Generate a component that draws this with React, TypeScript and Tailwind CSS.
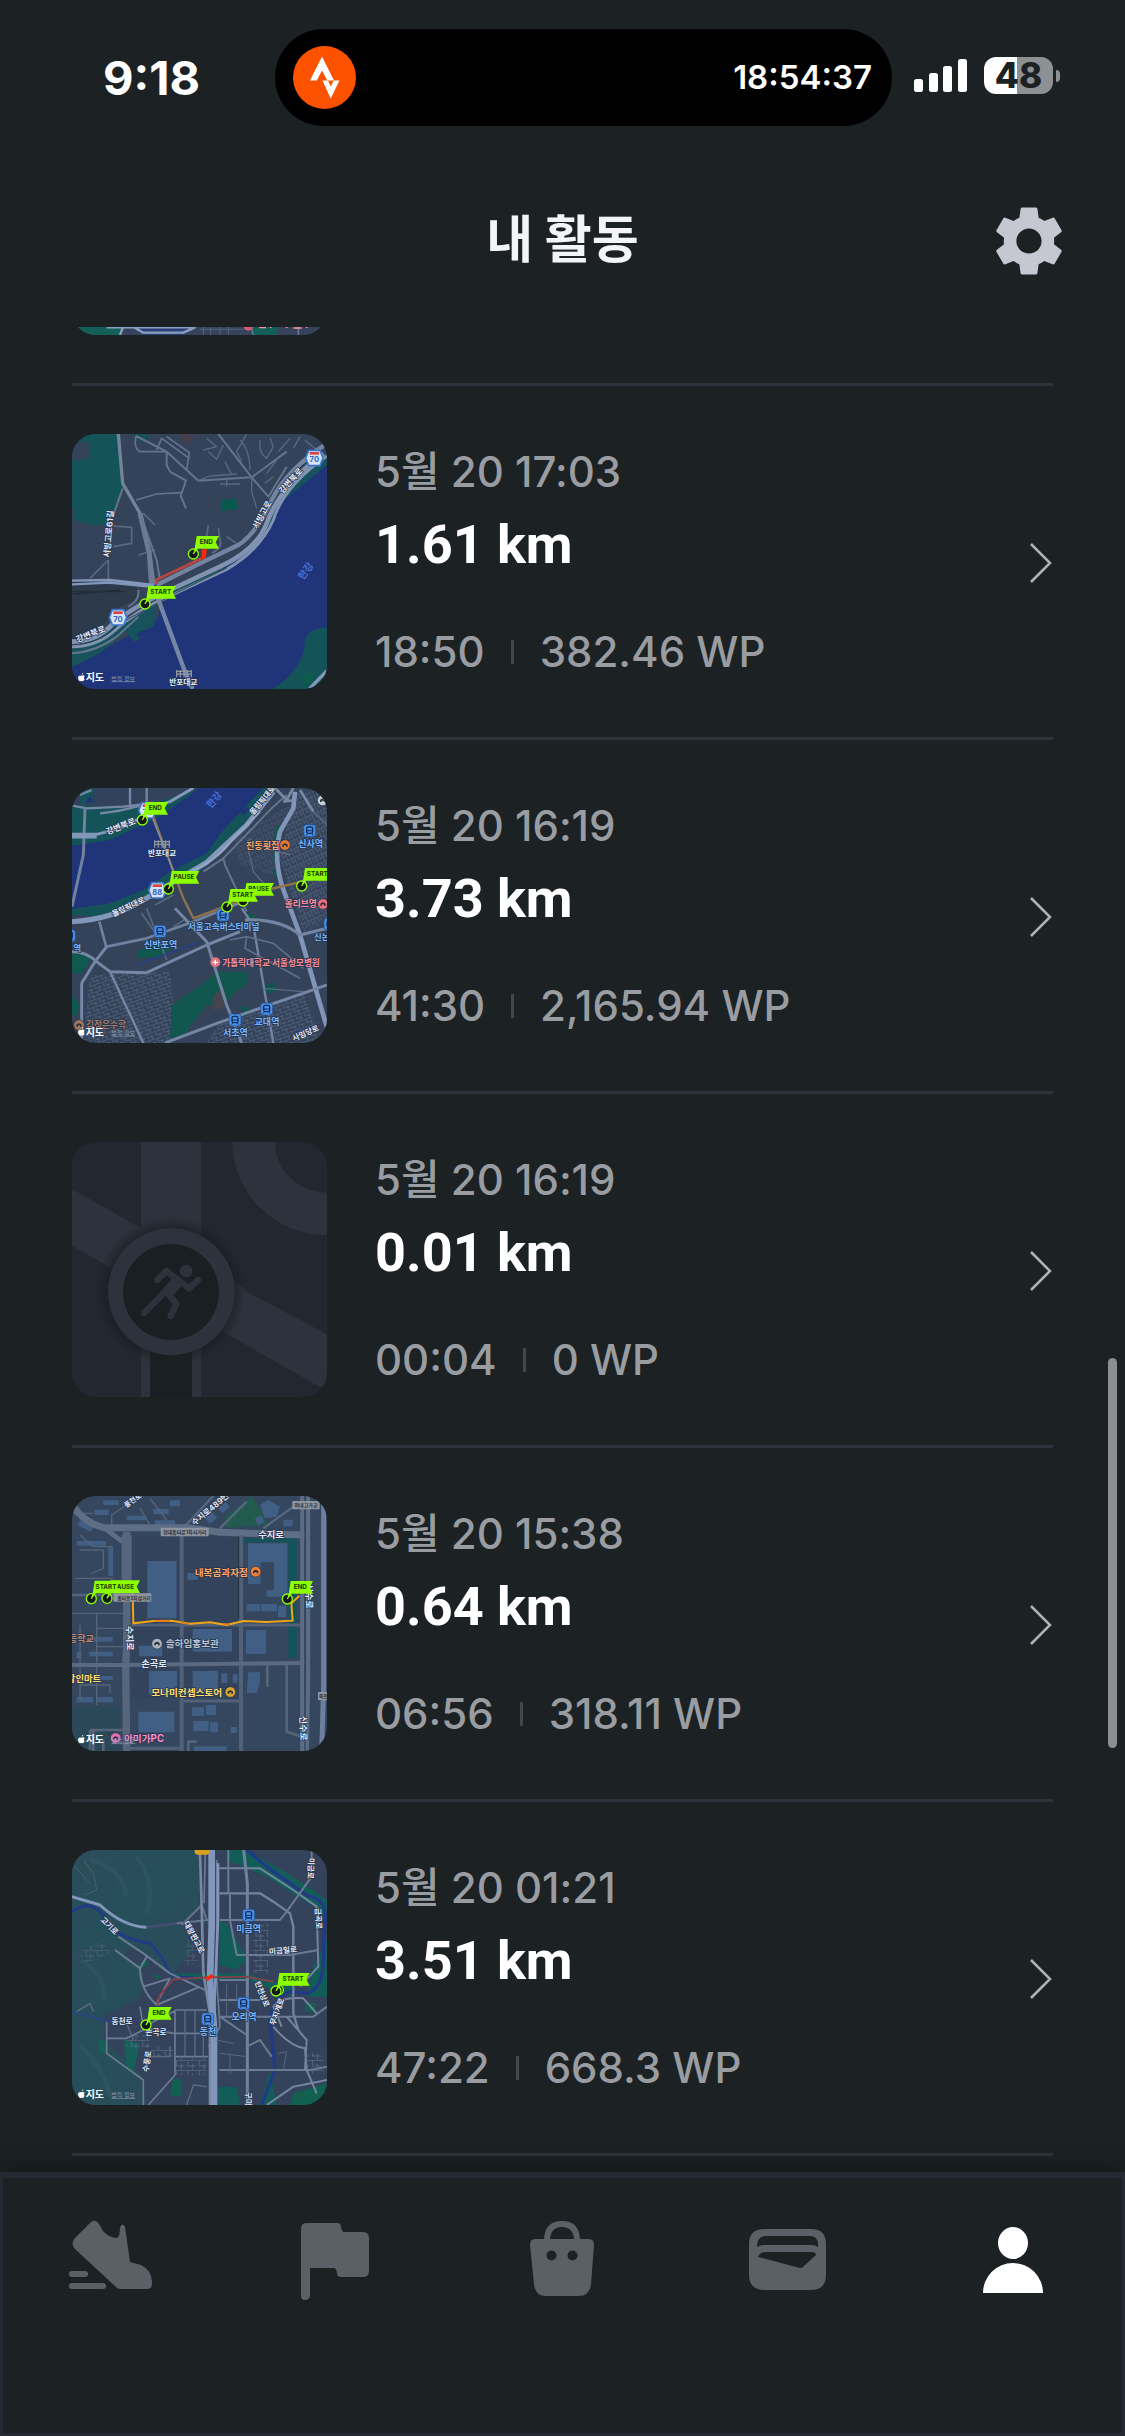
import type { ReactNode } from 'react'
import { MdSettings } from 'react-icons/md'

interface Activity {
  id: number
  date: string
  distance: string
  duration: string
  points: string
  map: ReactNode
}

interface Road {
  d: string
  w: number
  c?: string
}

const ROAD = '#64748c'
const MAIN_ROAD = '#8397bb'
const PARK = '#145459'
const WATER = '#1f3479'

const Roads = ({ items }: { items: Road[] }) => (
  <g fill="none" strokeLinejoin="round">
    {items.map((road, i) => (
      <path key={i} d={road.d} strokeWidth={road.w} stroke={road.c ?? ROAD} />
    ))}
  </g>
)

interface LabelProps {
  x: number
  y: number
  text: string
  size?: number
  fill?: string
  rotate?: number
  halo?: string
}

const Label = ({ x, y, text, size = 25, fill = '#e2eafa', rotate = 0, halo = '#26344c' }: LabelProps) => (
  <text
    x={x}
    y={y}
    fontSize={size}
    fontWeight={700}
    fill={fill}
    stroke={halo}
    strokeWidth={4}
    paintOrder="stroke"
    textAnchor="middle"
    dominantBaseline="central"
    transform={`rotate(${rotate} ${x} ${y})`}
  >
    {text}
  </text>
)

// x, y is the centre of the pin, the flag hangs to its upper right
const Pin = ({ x, y, text, w = 86 }: { x: number; y: number; text: string; w?: number }) => (
  <g>
    <circle cx={x} cy={y} r={15} fill="#14181b" stroke="#8cff00" strokeWidth={4} />
    <path d={`M${x} ${y} L${x + 10} ${y - 20}`} stroke="#8cff00" strokeWidth={4} />
    <path
      d={`M${x + 10} ${y - 54} H${x + w + 7} L${x + w - 3} ${y - 35} L${x + w + 7} ${y - 16} H${x + 14} L${x + 2} ${y - 2} Z`}
      fill="#8cff00"
    />
    <text
      x={x + w / 2 + 4}
      y={y - 35}
      fontSize={19}
      fontWeight={700}
      fill="#1b3300"
      textAnchor="middle"
      dominantBaseline="central"
    >
      {text}
    </text>
  </g>
)

const Station = ({ x, y }: { x: number; y: number }) => (
  <g>
    <rect x={x - 18} y={y - 18} width={36} height={36} rx={8} fill="#4a90e8" stroke="#1e4a8c" strokeWidth={2} />
    <rect x={x - 9} y={y - 11} width={18} height={19} rx={5} fill="none" stroke="#122d5c" strokeWidth={4} />
    <path d={`M${x - 9} ${y} h18 M${x - 7} ${y + 9} l-3 5 M${x + 7} ${y + 9} l3 5`} stroke="#122d5c" strokeWidth={3} />
  </g>
)

const Shield = ({ x, y, text }: { x: number; y: number; text: string }) => (
  <g>
    <path
      d={`M${x - 17} ${y - 23} H${x + 17} L${x + 26} ${y} L${x + 17} ${y + 23} H${x - 17} L${x - 26} ${y} Z`}
      fill="#d5e2f7"
      stroke="#3c76cc"
      strokeWidth={5}
    />
    <rect x={x - 14} y={y - 18} width={28} height={8} fill="#d8463f" />
    <text x={x} y={y + 5} fontSize={23} fontWeight={700} fill="#2f6bc6" textAnchor="middle" dominantBaseline="central">
      {text}
    </text>
  </g>
)

const Poi = ({ x, y, fill }: { x: number; y: number; fill: string }) => (
  <g>
    <circle cx={x} cy={y} r={16} fill={fill} stroke="#25303f" strokeWidth={2} />
    <path d={`M${x - 8} ${y + 5} v-6 q8 -9 16 0 v6 h-5 v-4 h-6 v4 Z`} fill="#26303d" />
  </g>
)

const Gate = ({ x, y }: { x: number; y: number }) => (
  <path
    d={`M${x - 24} ${y - 8} h48 M${x - 24} ${y} h48 M${x - 22} ${y - 12} v22 M${x - 11} ${y - 12} v22 M${x} ${y - 12} v22 M${x + 11} ${y - 12} v22 M${x + 22} ${y - 12} v22`}
    stroke="#8f959d"
    strokeWidth={4}
  />
)

const Attribution = ({ y }: { y: number }) => (
  <g>
    <path
      d={`M65 ${y - 8} q0 -5 5 -6 q0 5 -5 6 M64 ${y - 5} q-8 -3 -10 5 q0 8 6 12 q4 -2 8 0 q4 -1 6 -6 q-5 -5 0 -10 q-4 -4 -10 -1`}
      fill="#fff"
    />
    <text x={77} y={y} fontSize={30} fontWeight={700} fill="#fff" dominantBaseline="central">
      지도
    </text>
    <text x={154} y={y + 2} fontSize={18} fill="#8b99ad" textDecoration="underline" dominantBaseline="central">
      법적 정보
    </text>
  </g>
)

const MapFrame = ({ top, fill, children }: { top: number; fill: string; children: ReactNode }) => (
  <svg
    viewBox={`36 ${top} 765 765`}
    className="size-[255px] font-['Inter','Noto_Sans_CJK_KR',sans-serif]"
    aria-hidden="true"
  >
    <rect x={36} y={top} width={765} height={765} fill={fill} />
    {children}
  </svg>
)

const PreviousMap = () => (
  <MapFrame top={0} fill="#35445c">
    <path d="M36 600 H200 L180 765 H36 Z" fill="#136059" />
    <path d="M220 735 H410 L370 765 H250 Z" fill="#2b3f74" />
    <path d="M560 700 H650 V765 H575 Z" fill="#136059" />
    <Roads
      items={[
        { d: 'M205 700 L180 765 M140 742 H405 L370 758 H250 L215 738', w: 7, c: '#8ba0c0' },
        { d: 'M405 742 L440 720 M560 690 L580 765 M715 690 V765', w: 5 },
        { d: 'M430 730 V765 M452 730 V765 M480 730 V765 M505 735 V765 M420 748 H550', w: 2 },
      ]}
    />
    <circle cx={565} cy={738} r={14} fill="#d85a6c" />
    <path d="M600 722 V742 H618 M632 722 V744 M645 738 H665 M680 722 V744 M700 744 H725 M740 722 V744 M760 738 H790" stroke="#ff9299" strokeWidth={5} fill="none" />
  </MapFrame>
)

const RiversideMap = () => (
  <MapFrame top={42} fill="#35435a">
    <path d="M36 42 H175 L188 205 L150 308 Q100 325 45 300 L36 260 Z" fill={PARK} />
    <path d="M60 65 H85 L90 115 L36 123 V80 Z" fill="#35435a" />
    <path d="M215 42 H270 L255 65 L235 62 Z" fill="#17505a" />
    <path d="M355 42 H405 L380 80 Z" fill="#443f4c" />
    <path d="M484 240 L528 236 L532 268 L486 272 Z" fill="#06594c" />
    <path d="M36 485 L230 500 V540 L180 560 L100 650 L36 660 Z" fill="#2d3a4c" />
    <path d="M801 120 L700 190 L600 360 L430 480 L310 545 L290 600 L36 742 V807 H801 Z" fill={WATER} />
    <path d="M801 100 L715 165 L655 240 L600 360 L520 420 L310 530 L160 620 L36 690 V740 L120 700 L195 635 L225 665 L280 630 L290 550 L440 480 L600 370 L665 245 L801 135 Z" fill="#17535c" />
    <path d="M230 640 L285 618 V630 L235 655 Z" fill={WATER} />
    <path d="M640 807 Q735 740 735 660 Q745 625 801 622 V807 Z" fill={PARK} />
    <path d="M718 780 L740 755 L765 772 L745 800 Z" fill="#0b5c4d" />
    <Roads
      items={[
        { d: 'M228 48 L320 95 L380 150 L415 182 L575 172 L680 95 M320 95 V135 L330 155 L378 182 L362 228 L378 265', w: 6 },
        { d: 'M228 240 L290 222 L365 218 M228 48 Q220 85 240 95 L320 95 M290 90 L305 55 L388 115 M320 50 L388 98 L380 150', w: 5 },
        { d: 'M475 42 L575 172 L625 230 L680 140', w: 6 },
        { d: 'M415 182 L450 168 L530 162 M480 192 H540 M500 172 V200 M445 95 L470 118 L490 75 M430 90 L470 80 L440 55 M495 125 L515 165 M540 60 Q570 90 570 150 M600 60 Q595 100 620 115 L640 80 L630 55 M650 120 L620 160 M575 172 V215 L590 265 M690 55 L655 95 M720 50 L700 85 M735 60 L770 90 M560 42 L530 95 L545 125 M615 190 L640 170', w: 4, c: '#5a6980' },
        { d: 'M160 318 L215 322 V370 L160 380 M145 420 V478 M145 420 L90 475 M235 405 L285 390 M250 280 L285 315', w: 5, c: '#5a6980' },
        { d: 'M445 315 L440 350 L470 355 M500 350 L530 370 M475 325 L480 360 M455 400 Q490 380 480 360', w: 5, c: '#5a6980' },
        { d: 'M36 515 H190 M40 522 L180 510', w: 4, c: '#212c38' },
        { d: 'M175 42 L188 190 L240 280 L272 420 L282 495', w: 10, c: '#73839b' },
        { d: 'M188 205 L160 285 M240 280 L290 420 L300 480', w: 6 },
        { d: 'M240 280 L268 400 L275 500', w: 15, c: '#6a7b93' },
        { d: 'M36 482 L150 480 L280 495 M36 493 L150 488 L290 502', w: 7, c: MAIN_ROAD },
        { d: 'M290 495 L420 430 L535 375 Q590 340 635 240 Q680 150 801 70', w: 13, c: '#7384a0' },
        { d: 'M36 665 Q110 665 160 610 Q220 560 330 510 L480 440 Q590 390 620 310 Q660 200 790 100', w: 14, c: '#8193b0' },
        { d: 'M36 680 Q110 680 160 635 Q230 570 330 528 L500 448 Q600 390 640 300 Q670 200 801 108', w: 9, c: '#8193b0' },
        { d: 'M36 700 Q110 695 170 650 L235 590 M235 510 Q240 540 205 560', w: 6 },
        { d: 'M60 672 Q130 665 180 610 L350 518 L500 444', w: 3, c: '#30415a' },
        { d: 'M290 525 L375 755 L398 807', w: 13, c: '#7587a5' },
        { d: 'M748 807 L801 752', w: 10, c: MAIN_ROAD },
      ]}
    />
    <path d="M290 492 L288 480 L425 415" fill="none" stroke="#b5453f" strokeWidth={9} />
    <path d="M424 390 L440 386 L438 415 L426 418 Z" fill="#ff2600" />
    <Shield x={763} y={114} text="70" />
    <Shield x={174} y={592} text="70" />
    <Label x={692} y={182} text="강변북로" rotate={-47} />
    <Label x={606} y={284} text="서빙고로" rotate={-61} />
    <Label x={146} y={342} text="서빙고로61길" rotate={-85} />
    <Label x={92} y={642} text="강변북로" rotate={-22} />
    <Label x={736} y={452} text="한강" size={30} fill="#4a70d6" halo={WATER} rotate={-55} />
    <Gate x={372} y={762} />
    <Label x={370} y={788} text="반포대교" size={23} />
    <Pin x={400} y={402} text="END" w={70} />
    <Pin x={255} y={552} text="START" />
    <Attribution y={772} />
  </MapFrame>
)

const TerminalMap = () => (
  <MapFrame top={39} fill="#34425a">
    <defs>
      <pattern id="blocks" width="26" height="21" patternUnits="userSpaceOnUse" patternTransform="rotate(-18)">
        <path d="M0 1 H26 M8 1 V14 M20 8 V21 M8 12 H26" stroke="#51617a" strokeWidth={2.5} fill="none" />
      </pattern>
      <pattern id="slopes" width="20" height="24" patternUnits="userSpaceOnUse" patternTransform="rotate(-24)">
        <path d="M1 0 V24 M1 8 H20 M11 8 V24 M11 18 H20" stroke="#51617a" strokeWidth={2.5} fill="none" />
      </pattern>
    </defs>
    <path d="M90 600 L330 590 L340 690 L330 804 H70 Z" fill="url(#blocks)" />
    <path d="M700 60 L801 39 V440 L730 470 L660 250 Z" fill="url(#slopes)" />
    <path d="M480 740 L730 650 L790 804 H440 Z" fill="url(#blocks)" />
    <path d="M520 190 L690 90 L640 300 L540 270 Z" fill="url(#slopes)" opacity={0.6} />
    <path d="M36 90 H100 L230 100 L430 39 H640 L520 190 L420 290 L250 370 L150 425 L36 420 Z" fill={PARK} />
    <path d="M36 39 H240 V85 L120 95 L36 85 Z" fill="#33425c" />
    <path d="M60 50 L100 39 V85 H60 Z" fill={PARK} />
    <path d="M36 212 L150 195 L290 130 L420 39 H610 L490 165 L440 235 L330 290 L250 345 L150 385 L36 402 Z" fill={WATER} />
    <path d="M540 110 L560 95 L570 105 L548 120 Z M75 85 L90 62 L100 82 Z" fill={WATER} />
    <path d="M230 530 L300 500 L340 520 L300 545 L235 550 Z M645 150 L665 155 L640 300 L660 310 L640 250 Z M36 530 Q80 520 90 560 L60 600 L36 590 Z M36 660 L60 690 L50 720 H36 Z" fill="#10594f" />
    <path d="M410 640 L470 590 L560 590 L565 625 L520 655 L490 700 L440 690 L400 740 L370 785 L330 790 L335 690 L370 665 Z" fill="#12574f" />
    <path d="M605 635 L640 620 L655 650 L615 655 Z M540 690 L570 700 L555 730 Z M560 410 L600 430 H560 Z" fill="#12574f" />
    <path d="M460 660 L490 640 L500 700 L455 705 Z" fill="#444550" />
    <Roads
      items={[
        { d: 'M36 92 L80 100 L190 95 L270 85 M120 115 Q180 110 240 92 M210 92 V39 M95 45 L60 60 M260 39 V85', w: 7, c: '#7587a5' },
        { d: 'M75 100 L70 240 L36 395', w: 9, c: '#6f82a0' },
        { d: 'M36 178 L110 178 L180 160 L240 130 M270 100 L330 80 L400 39 M36 186 H110', w: 9, c: MAIN_ROAD },
        { d: 'M36 440 Q150 435 250 375 L440 262 L560 150 L640 50', w: 15, c: MAIN_ROAD },
        { d: 'M380 295 Q470 260 520 190 L600 110', w: 6, c: '#94a6c2' },
        { d: 'M430 290 L490 250 L640 95 L680 60 M490 250 L495 270 L560 410', w: 6 },
        { d: 'M645 39 L680 75 L700 39 M670 80 L705 75 M720 45 L760 110', w: 8, c: '#7889a4' },
        { d: 'M705 50 L700 100 L660 170 Q640 240 665 330 L720 480 L800 755', w: 14, c: '#8095b8' },
        { d: 'M260 400 L320 555 M285 390 L340 360 M340 455 L380 430 M245 415 L290 480', w: 5, c: '#586880' },
        { d: 'M118 440 L140 520 M140 515 L260 490 L400 440 L560 375', w: 8, c: '#7081a0' },
        { d: 'M36 530 Q80 530 110 560 L150 590 L260 593 L440 510 L540 470 M140 515 L105 560 L65 625 V804', w: 9, c: '#7487a6' },
        { d: 'M150 590 L250 804', w: 7, c: '#7487a6' },
        { d: 'M345 400 L440 500 L500 690 L545 804', w: 9, c: '#7385a2' },
        { d: 'M545 400 L580 450 L640 804', w: 7, c: '#7385a2' },
        { d: 'M555 435 Q660 430 720 480 L801 460', w: 10, c: '#7385a2' },
        { d: 'M230 570 L420 500', w: 5, c: '#26418a' },
        { d: 'M510 495 L560 485 L640 505 L730 580 M560 485 L555 520 L720 610', w: 5, c: '#5e6f89' },
        { d: 'M315 804 L470 745 L801 630', w: 9, c: '#7385a2' },
        { d: 'M610 640 L730 650 M575 190 L560 200 L580 290 L615 330 M600 215 L690 240 M760 110 L801 150', w: 4, c: '#5a6a82' },
        { d: 'M280 125 L370 370 L400 430 L480 400 L620 345 L725 320', w: 7, c: '#8d744c' },
        { d: 'M270 110 L345 300', w: 4, c: '#87909c' },
      ]}
    />
    <Shield x={262} y={106} text="70" />
    <Shield x={292} y={346} text="88" />
    <Label x={462} y={74} text="한강" size={29} fill="#4a70d6" halo={WATER} rotate={-50} />
    <Label x={182} y={154} text="강변북로" rotate={-22} />
    <Label x={608} y={76} text="올림픽대로" size={23} rotate={-50} />
    <Label x={205} y={396} text="올림픽대로" size={23} rotate={-25} />
    <Gate x={306} y={208} />
    <Label x={306} y={234} text="반포대교" size={23} />
    <Label x={608} y={211} text="진동횟집" size={27} fill="#ffa563" />
    <Poi x={675} y={210} fill="#e07b35" />
    <Station x={749} y={167} />
    <Label x={752} y={205} text="신사역" fill="#74b4ff" size={27} />
    <Poi x={788} y={76} fill="#c6ccd4" />
    <Label x={722} y={387} text="올리브영" size={26} fill="#ff8e9c" />
    <Poi x={789} y={387} fill="#e96f7f" />
    <Station x={489} y={420} />
    <Label x={491} y={457} text="서울고속버스터미널" size={26} fill="#74b4ff" />
    <Station x={300} y={469} />
    <Label x={302} y={507} text="신반포역" size={27} fill="#74b4ff" />
    <Label x={52} y={518} text="역" fill="#74b4ff" />
    <Station x={28} y={482} />
    <Station x={810} y={448} />
    <Label x={785} y={486} text="신논" fill="#74b4ff" />
    <circle cx={466} cy={562} r={15} fill="#e5727f" />
    <path d="M466 554 V570 M458 562 H474" stroke="#fff" strokeWidth={4} />
    <Label x={633} y={563} text="가톨릭대학교 서울성모병원" size={26} fill="#ff8e9c" />
    <Station x={620} y={702} />
    <Label x={621} y={739} text="교대역" fill="#74b4ff" size={27} />
    <Station x={525} y={735} />
    <Label x={526} y={771} text="서초역" fill="#74b4ff" size={27} />
    <Label x={737} y={775} text="사임당로" size={23} rotate={-24} />
    <Poi x={57} y={750} fill="#a0765f" />
    <Label x={138} y={751} text="김정은수학" size={26} fill="#a07a69" />
    <Pin x={247} y={135} text="END" w={70} />
    <Pin x={325} y={342} text="PAUSE" />
    <Pin x={725} y={333} text="START" />
    <Pin x={549} y={378} text="PAUSE" />
    <Pin x={501} y={396} text="START" />
    <Attribution y={770} />
  </MapFrame>
)

const EmptyMap = () => (
  <MapFrame top={36} fill="#21282f">
    <defs>
      <radialGradient id="ring-shadow">
        <stop offset="0.8" stopColor="#171b20" stopOpacity={0.75} />
        <stop offset="1" stopColor="#171b20" stopOpacity={0} />
      </radialGradient>
    </defs>
    <g fill="#2c333c">
      <path d="M243 36 H423 V340 H243 Z" />
      <path d="M36 177 L801 613 V783 L36 347 Z" />
      <path d="M243 620 H423 V801 H243 Z" />
    </g>
    <path d="M423 318 L560 485 L801 613 V316 Q620 316 530 140 H423 Z" fill="#21282f" />
    <path d="M517 36 A284 280 0 0 0 801 316 V188 A156 152 0 0 1 645 36 Z" fill="#2c333c" />
    <circle cx={333} cy={484} r={224} fill="url(#ring-shadow)" />
    <path d="M270 650 H396 V801 H270 Z" fill="#1a1f23" />
    <circle cx={334} cy={485} r={190} fill="#2c333c" />
    <circle cx={333} cy={486} r={144} fill="#1a1f23" />
    <circle cx={378} cy={423} r={19} fill="#2c333c" />
    <g fill="none" stroke="#2c333c" strokeWidth={19} strokeLinecap="round" strokeLinejoin="round">
      <path d="M292 450 L319 423 L387 475 L414 450" />
      <path d="M346 448 L318 482 L252 549" />
      <path d="M324 492 L349 521 L332 558" />
    </g>
    <path d="M325 430 L370 462 L336 500 L308 486 L335 452 Z" fill="#2c333c" />
  </MapFrame>
)

const SujiMap = () => (
  <MapFrame top={33} fill="#35475f">
    <path d="M215 155 H540 V640 H215 Z" fill="#33435c" />
    <path d="M36 665 H180 V798 H36 Z" fill="#2b4858" />
    <path d="M575 33 L600 70 L625 120 L500 128 L490 100 Z" fill="#235a50" />
    <path d="M550 160 H710 V518 H685 V172 H550 Z" fill={PARK} />
    <g fill="#415f84">
      <path d="M262 228 H350 V400 H262 Z M564 175 H682 V335 H620 V315 H642 V232 H602 V297 H564 Z" />
      <path d="M560 357 h40 v22 h-40 Z M603 357 h48 v22 h-48 Z M654 362 h24 v34 h-24 Z M558 435 h60 v72 h-60 Z M398 432 h118 v68 h-118 Z M382 264 h32 v20 h-32 Z" />
      <path d="M237 482 h70 v32 h-70 Z M267 558 h84 v70 h-84 Z M398 558 h76 v60 h-76 Z M484 565 h18 v30 h-18 Z M518 568 h15 v25 h-15 Z M565 562 h35 v30 l-10 32 h-30 Z" />
      <path d="M235 680 h108 v62 h-108 Z M396 667 h36 v26 h-36 Z M438 660 h30 v30 h-30 Z M400 708 h46 v30 h-46 Z M450 712 h24 v30 h-24 Z M512 726 h18 v18 h-18 Z M402 784 h98 v14 h-98 Z" />
      <path d="M50 168 h88 v14 h-88 Z M145 183 h14 v90 h-14 Z M88 456 h70 v14 h-70 Z M88 500 h70 v14 h-70 Z M88 573 h70 v12 h-70 Z M50 636 h50 v16 h-50 Z M108 636 h50 v16 h-50 Z M50 500 h14 v20 h-14 Z" />
      <path d="M104 74 h42 v16 h-42 Z M130 46 h45 v14 h-45 Z M200 92 h58 v14 h-58 Z M280 72 h46 v16 h-46 Z M285 106 h60 v14 h-60 Z M330 46 h30 v18 h-30 Z M62 106 l40 20 l-10 14 l-40 -20 Z" />
      <path d="M600 60 l25 -15 l35 20 l-10 30 l-35 5 Z M585 100 l20 -8 l8 20 l-20 8 Z M670 104 h28 v20 h-28 Z M435 100 l22 -18 l14 16 l-22 18 Z M475 70 l22 -18 l12 14 l-22 18 Z" />
    </g>
    <Roads
      items={[
        { d: 'M36 85 H100 M60 150 L100 185 H155 M60 195 H130 V250 L95 265 M45 280 H160 M200 60 L155 90 V120 M270 40 L320 105 M240 70 L270 120 M36 385 H190 M110 385 V660 M60 420 V640 M110 430 H190 M110 485 H190 M60 600 H150 V625', w: 4, c: '#566479' },
        { d: 'M36 330 H215 M90 735 H200 M100 735 V798 M130 765 V798 M90 735 V798 M385 798 V770 H410 M622 540 V605 M680 540 V740 L740 760', w: 8, c: '#56647a' },
        { d: 'M350 150 L460 33 M480 130 L560 50 M610 130 L700 65', w: 7, c: '#57677f' },
        { d: 'M36 60 Q75 115 130 128 H380 L480 142 L735 150', w: 21, c: '#5e6e84' },
        { d: 'M130 128 L195 175', w: 14, c: '#5e6e84' },
        { d: 'M200 140 V480 L197 540 L200 798', w: 22, c: '#56667d' },
        { d: 'M200 150 V330', w: 30, c: '#56667d' },
        { d: 'M365 150 V800 M543 150 V798', w: 12, c: '#526178' },
        { d: 'M536 155 V400', w: 3, c: '#222d3a' },
        { d: 'M36 540 H200 L735 534', w: 12, c: '#5b6a80' },
        { d: 'M372 648 H540 M215 420 H720 M200 790 H370', w: 9, c: '#526178' },
        { d: 'M727 33 V798 M744 33 V600 L740 798', w: 13, c: '#5c6c84' },
        { d: 'M735 33 V798', w: 3, c: '#2b3a50' },
        { d: 'M791 33 V600 L785 798', w: 15, c: '#6c7f9f' },
      ]}
    />
    <path
      d="M218 320 L220 415 L280 408 L335 407 L390 416 L450 412 L500 420 L550 408 L620 411 L698 407 L694 355 L718 332"
      fill="none"
      stroke="#f0a416"
      strokeWidth={6}
    />
    <path d="M285 408 H330 M360 411 L385 416 M490 417 L510 418" stroke="#e4761b" strokeWidth={4} />
    <g>
      <rect x={302} y={128} width={144} height={26} rx={3} fill="#8f959e" />
      <rect x={160} y={325} width={114} height={25} rx={3} fill="#8f959e" />
      <rect x={697} y={48} width={82} height={25} rx={3} fill="#8f959e" />
      <rect x={774} y={621} width={40} height={25} rx={3} fill="#8f959e" />
      <Label x={374} y={141} text="현대홈타운1차사거리" size={15} fill="#2b313a" halo="none" />
      <Label x={222} y={338} text="홈타운3차삼거리" size={14} fill="#2b313a" halo="none" />
      <Label x={738} y={61} text="머내고가교" size={15} fill="#2b313a" halo="none" />
      <Label x={790} y={634} text="죽전" size={15} fill="#2b313a" halo="none" />
    </g>
    <Label x={218} y={46} text="풍천로" rotate={-35} size={21} />
    <Label x={450} y={72} text="수지로489번" rotate={-40} size={24} />
    <Label x={633} y={149} text="수지로" size={28} />
    <Label x={210} y={460} text="수지로" size={27} rotate={88} />
    <Label x={748} y={334} text="신수로" size={27} rotate={88} />
    <Label x={731} y={730} text="신수로" size={27} rotate={88} />
    <Label x={282} y={536} text="손곡로" size={28} />
    <Label x={484} y={261} text="내복곰과자점" size={29} fill="#ffa563" />
    <Poi x={587} y={260} fill="#ee8137" />
    <Poi x={291} y={476} fill="#a9b2bd" />
    <Label x={397} y={476} text="솔하임홍보관" size={29} fill="#b9c3cf" />
    <Label x={64} y={461} text="등학교" size={27} fill="#b98c73" />
    <Label x={72} y={580} text="할인마트" size={28} fill="#ffdf6b" />
    <Label x={380} y={622} text="모나미컨셉스토어" size={29} fill="#ffdf6b" />
    <Poi x={511} y={621} fill="#d8a233" />
    <Poi x={167} y={759} fill="#e071b4" />
    <Label x={252} y={760} text="아미가PC" size={29} fill="#ff8fd0" />
    <Pin x={141} y={340} text="PAUSE" w={92} />
    <Pin x={94} y={341} text="START" w={80} />
    <Pin x={682} y={342} text="END" w={70} />
    <Attribution y={763} />
  </MapFrame>
)

const DongcheonMap = () => (
  <MapFrame top={30} fill="#34425b">
    <defs>
      <pattern id="estate" width="34" height="30" patternUnits="userSpaceOnUse">
        <path d="M0 1 H34 M10 1 V20 M24 10 V30 M10 18 H34" stroke="#596983" strokeWidth={2.5} fill="none" />
      </pattern>
      <linearGradient id="forest" x1="0" y1="0" x2="1" y2="1">
        <stop offset="0" stopColor="#2d4d5b" />
        <stop offset="0.5" stopColor="#254f5a" />
        <stop offset="1" stopColor="#2c4c5b" />
      </linearGradient>
    </defs>
    <path d="M36 30 H415 V200 L365 250 L400 330 L330 410 L240 330 L160 330 L36 340 Z" fill="url(#forest)" />
    <path d="M36 330 L170 310 L250 400 L245 470 L130 530 V600 L240 700 L260 795 H36 Z" fill="url(#forest)" />
    <path d="M90 60 Q190 90 200 170 M230 50 Q290 130 260 220 M60 360 Q140 400 130 480 M60 620 Q130 680 150 770" fill="none" stroke="#315a63" strokeWidth={14} opacity={0.5} />
    <path d="M115 600 L135 600 L140 640 L120 640 Z M190 600 L240 610 L220 700 L200 680 Z" fill="#17605a" />
    <path d="M480 245 L500 250 L530 300 L560 360 L530 390 L480 375 Z M500 30 H560 L700 110 L801 180 V240 L760 200 L620 110 L500 60 Z" fill="#135d59" />
    <path d="M340 400 H560 L640 425 L690 430 L700 470 L640 450 L560 420 H340 Z M760 380 L801 300 V470 H740 Z M475 740 H530 L540 795 H475 Z M630 690 L650 795 H600 Z" fill="#135d59" />
    <path d="M340 715 L365 720 V770 L330 765 Z M230 375 L260 360 L265 375 L235 390 Z M280 400 L305 410 L290 420 Z M735 485 L770 490 L760 520 L735 510 Z M700 760 L801 730 V795 H690 Z" fill="#12604f" />
    <path d="M580 250 H625 V400 H580 Z M345 655 H440 V705 H345 Z M270 620 H340 V650 H270 Z M200 585 H270 V625 H200 Z M740 640 H790 V700 H740 Z" fill="url(#estate)" />
    <path d="M385 300 L415 290 V370 L370 380 Z M55 340 L130 300 L150 340 L80 370 Z" fill="url(#estate)" opacity={0.7} />
    <Roads
      items={[
        { d: 'M560 30 L620 80 L740 165 Q801 180 795 230 L790 330 Q795 450 740 460 L690 455 Q640 470 630 540 L645 690 L605 795', w: 10, c: '#213a85' },
        { d: 'M36 215 Q90 175 130 225 Q150 290 270 310 Q310 350 330 400 Q350 415 400 412', w: 8, c: '#213a85' },
        { d: 'M36 515 L90 530 L150 545 L230 545', w: 5, c: '#2a4284' },
        { d: 'M70 60 L100 100 L110 150 L75 165 M45 80 L90 130', w: 3, c: '#4b6170' },
        { d: 'M36 170 L120 195 Q190 260 260 262', w: 9, c: MAIN_ROAD },
        { d: 'M260 262 L370 248', w: 9, c: '#414d6d' },
        { d: 'M350 250 L395 245 L445 240 M365 255 L425 195 L440 240', w: 6 },
        { d: 'M175 290 L250 340 L330 400 L445 455 M165 330 L240 385 Q240 450 290 495 M240 385 L260 350 M250 440 L330 415 M330 415 L290 490 M290 495 L420 440', w: 6, c: '#6b7b93' },
        { d: 'M240 500 L250 560 L350 510 H440 M345 510 V705 L265 795 M140 545 V640 L250 720 V795 M140 595 H200 L260 565 L340 580 H440 M345 650 H445', w: 5, c: '#6b7b93' },
        { d: 'M375 510 V650 M405 510 V650 M430 580 V650 M330 620 V650 H270 M200 550 L220 600 M50 515 L90 490 L100 515 M400 735 L440 740 M380 795 L400 735', w: 4, c: '#5c6c84' },
        { d: 'M420 40 L425 200 L430 400 L450 520 V795', w: 8, c: '#7788a3' },
        { d: 'M436 40 L432 190 M470 60 V420 L480 560 L445 620', w: 5, c: '#6b7b93' },
        { d: 'M455 30 V260 L450 420 L462 560 V795', w: 20, c: '#8296bb' },
        { d: 'M474 70 V240 L462 520', w: 8, c: '#8296bb' },
        { d: 'M551 30 L562 130 V795', w: 9, c: '#71829e' },
        { d: 'M478 85 H600 L700 150 L770 200 L775 380 L720 440', w: 6, c: '#74849e' },
        { d: 'M478 160 H600 L640 185 L690 220 L700 260 V520 L715 570', w: 7, c: '#74849e' },
        { d: 'M755 30 V110 L680 215 L660 240 H480 M505 30 V160 M510 165 V240 L530 345 H690 L775 330', w: 6, c: '#6b7b93' },
        { d: 'M478 420 H560 M478 480 H600 M478 530 H760 L801 500 M480 530 L560 585 M478 690 H750 L801 680 M560 620 L600 600 L635 650', w: 6, c: '#6b7b93' },
        { d: 'M665 560 L640 500 Q660 470 730 475 L770 520 M640 560 Q690 620 735 625 L740 690 L770 760 M680 530 L740 600 L735 690 M620 795 L700 740 L801 720', w: 6, c: '#74849e' },
        { d: 'M470 600 L520 610 M500 430 V530 M530 430 V480 M480 640 L560 650 M510 700 V640 M655 640 L680 635 L670 690 M570 410 L600 430 L620 500', w: 3, c: '#596983' },
      ]}
    />
    <path d="M404 30 H448 V36 Q448 44 438 44 H414 Q404 44 404 36 Z" fill="#d9a01c" />
    <path d="M292 495 L300 465 L340 418 L440 412 L560 410 L640 425" fill="none" stroke="#8a3d4b" strokeWidth={5} />
    <path d="M436 414 L455 402 L462 410 L442 423 Z" fill="#ff2600" />
    <Label x={752} y={85} text="미금로" size={23} rotate={93} />
    <Label x={775} y={236} text="금곡로" size={23} rotate={86} />
    <Label x={148} y={258} text="고기로" size={23} rotate={45} />
    <Label x={402} y={292} text="대왕판교로" size={23} rotate={62} />
    <Label x={669} y={332} text="미금일로" rotate={-6} size={23} />
    <Label x={606} y={462} text="탄천상로" size={22} rotate={68} />
    <Label x={652} y={515} text="무지개로" size={23} rotate={-70} />
    <Label x={186} y={543} text="동천로" size={23} />
    <Label x={288} y={576} text="손곡로" size={23} />
    <Label x={262} y={664} text="수풍로" size={23} rotate={-82} />
    <Label x={564} y={776} text="구미" size={22} rotate={90} />
    <Station x={566} y={226} />
    <Label x={566} y={264} text="미금역" size={27} fill="#74b4ff" />
    <Station x={551} y={490} />
    <Label x={552} y={528} text="오리역" size={27} fill="#74b4ff" />
    <Station x={443} y={537} />
    <Label x={444} y={574} text="동천" size={27} fill="#74b4ff" />
    <circle cx={656} cy={450} r={14} fill="#14181b" stroke="#8cff00" strokeWidth={4} />
    <Pin x={648} y={453} text="START" w={94} />
    <Pin x={258} y={555} text="END" w={70} />
    <Attribution y={762} />
  </MapFrame>
)

const activities: Activity[] = [
  { id: 1, date: '5월 20 17:03', distance: '1.61 km', duration: '18:50', points: '382.46 WP', map: <RiversideMap /> },
  { id: 2, date: '5월 20 16:19', distance: '3.73 km', duration: '41:30', points: '2,165.94 WP', map: <TerminalMap /> },
  { id: 3, date: '5월 20 16:19', distance: '0.01 km', duration: '00:04', points: '0 WP', map: <EmptyMap /> },
  { id: 4, date: '5월 20 15:38', distance: '0.64 km', duration: '06:56', points: '318.11 WP', map: <SujiMap /> },
  { id: 5, date: '5월 20 01:21', distance: '3.51 km', duration: '47:22', points: '668.3 WP', map: <DongcheonMap /> },
]

const StatusBar = () => (
  <div className="flex h-[97px] items-center text-white">
    <div className="w-[275px] pl-[103px] text-[47px] font-bold leading-none">9:18</div>
    <div className="flex h-full flex-1 items-center justify-between rounded-full bg-black pl-[18px] pr-5">
      <svg viewBox="0 0 63 63" className="size-[63px]" aria-hidden="true">
        <circle cx="31.5" cy="31.5" r="31.5" fill="#fc5200" />
        <path d="M29 10.500 L41 34.500 H34.200 L29 24.500 L23.800 34.500 H17 Z" fill="#fff" />
        <path d="M29.500 34.500 H35 L37.700 40.500 L40.700 34.500 H46.500 L37.700 52.500 Z" fill="#fff" />
      </svg>
      <span className="text-[33px] font-semibold leading-none">18:54:37</span>
    </div>
    <div className="flex w-[233px] items-center gap-[17px] pb-1 pl-[22px]">
      <svg viewBox="0 0 53 33" className="h-[33px] w-[53px]" fill="#fff" aria-hidden="true">
        <rect x="0" y="20" width="9" height="13" rx="2.500" />
        <rect x="15" y="14" width="9" height="19" rx="2.500" />
        <rect x="29" y="7" width="9" height="26" rx="2.500" />
        <rect x="44" y="0" width="9" height="33" rx="2.500" />
      </svg>
      <div className="flex items-center gap-[3px]">
        <div className="flex h-[37px] w-[69px] items-center justify-center rounded-xl bg-linear-to-r from-white from-48% to-[#8e9193] to-48% text-[35px] font-extrabold leading-none text-[#1c2124]">
          48
        </div>
        <div className="h-3 w-1 rounded-r-full bg-[#8e9193]" />
      </div>
    </div>
  </div>
)

const ActivityRow = ({ activity }: { activity: Activity }) => (
  <li className="shrink-0 border-b-[3px] border-[#2b333b]">
    <a href="#" className="flex items-center gap-12 py-12">
      <div className="shrink-0 overflow-hidden rounded-3xl">{activity.map}</div>
      <div className="flex-1 text-[42px] font-medium leading-[50px] text-[#999ca0]">
        <p>{activity.date}</p>
        <p className="mb-[50px] mt-4 font-['Roboto'] text-[54px] font-bold leading-[64px] text-white">
          {activity.distance}
        </p>
        <p className="flex items-center">
          {activity.duration}
          <span className="mx-[26px] h-6 w-[3px] bg-[#42474c]" />
          {activity.points}
        </p>
      </div>
      <svg viewBox="0 0 24 42" className="h-[42px] w-6" aria-hidden="true">
        <path d="M2 3 L21 22 L2 41" fill="none" stroke="#b0b3b6" strokeWidth={2.5} />
      </svg>
    </a>
  </li>
)

// tab icons share a 90 x 90 box
const tabs = [
  {
    name: 'Move',
    icon: (
      <>
        <path d="M8 35 Q3 30 8 24 L23 9 Q28 4 32 10 L36 17 Q42 24 50 24 Q53 23 53 13 Q56 8 58 13 L63 48 L74 51 Q84 56 85 67 V70 Q85 75 80 75 H53 Q51 75 49 73 Z" />
        <rect x="2" y="57" width="19" height="6" rx="3" />
        <rect x="2" y="69" width="37" height="6" rx="3" />
      </>
    ),
  },
  {
    name: 'Challenge',
    icon: (
      <path d="M14 9 H45 Q49 9 49 13 Q50 18 52 18 H71 Q77 18 77 24 V57 Q77 63 71 63 H49 Q45 63 45 59 Q44 54 42 54 H18 V82 Q17 86 13 86 Q9 86 9 82 V15 Q9 9 14 9 Z" />
    ),
  },
  {
    name: 'Shop',
    icon: (
      <>
        <path d="M29 27 Q29 10 44 10 Q59 10 59 27" fill="none" stroke="currentColor" strokeWidth="6" />
        <path
          fillRule="evenodd"
          d="M17 25 H71 Q76 25 76 31 L73 70 Q72 82 60 82 H28 Q17 82 16 70 L12 31 Q12 25 17 25 Z M33.500 36.500 A5 5 0 1 0 33.500 46.500 A5 5 0 1 0 33.500 36.500 Z M54.500 36.500 A5 5 0 1 0 54.500 46.500 A5 5 0 1 0 54.500 36.500 Z"
        />
      </>
    ),
  },
  {
    name: 'Wallet',
    icon: (
      <path
        fillRule="evenodd"
        d="M22 15 H68 Q83 15 83 30 V61 Q83 76 68 76 H22 Q6 76 6 61 V30 Q6 15 22 15 Z M23 22 Q14 22 14 33 Q17 31 21 31 H68 Q73 31 75 33 Q76 22 67 22 Z M22 38 Q17 38 15 43 L57 54 Q60 54 61 52 L73 41 Q73 38 68 38 Z"
      />
    ),
  },
  {
    name: 'My',
    active: true,
    icon: (
      <>
        <ellipse cx="45" cy="29" rx="15" ry="16" />
        <path d="M15 79 A30 30 0 0 1 75 79 Z" />
      </>
    ),
  },
]

export default function App() {
  return (
    <div className="relative flex h-screen flex-col overflow-hidden bg-[#1c2124] font-['Inter','Noto_Sans_CJK_KR',sans-serif]">
      <header className="pt-[29px]">
        <StatusBar />
        <div className="mt-7 grid h-[173px] grid-cols-[1fr_auto_1fr] items-center px-[54px]">
          <h1 className="col-start-2 pb-2 font-['Noto_Sans_CJK_KR'] text-[51px] font-bold leading-none text-[#f3f4f6]">
            내 활동
          </h1>
          <button type="button" aria-label="설정" className="justify-self-end text-[#c5c8d0]">
            <MdSettings className="size-[84px]" />
          </button>
        </div>
      </header>

      <main className="min-h-0 flex-1 overflow-hidden">
        <ul className="flex h-full flex-col justify-end px-[72px] pb-4">
          <li className="shrink-0 border-b-[3px] border-[#2b333b] pb-12">
            <div className="size-[255px] overflow-hidden rounded-3xl">
              <PreviousMap />
            </div>
          </li>
          {activities.map((activity) => (
            <ActivityRow key={activity.id} activity={activity} />
          ))}
        </ul>
      </main>

      <div className="absolute right-2 top-[1358px] h-[390px] w-[9px] rounded-full bg-[#8c8e91]" />

      <nav className="flex h-[264px] shrink-0 items-start justify-between border-[3px] border-t-[6px] border-[#232a32] bg-[#1c2124] px-16 pt-9 shadow-[0_-6px_20px_rgba(0,0,0,0.25)]">
        {tabs.map((tab) => (
          <a
            key={tab.name}
            href="#"
            aria-label={tab.name}
            className={tab.active ? 'text-white' : 'text-[#5a6166]'}
          >
            <svg viewBox="0 0 90 90" className="size-[90px]" fill="currentColor" aria-hidden="true">
              {tab.icon}
            </svg>
          </a>
        ))}
      </nav>
    </div>
  )
}
